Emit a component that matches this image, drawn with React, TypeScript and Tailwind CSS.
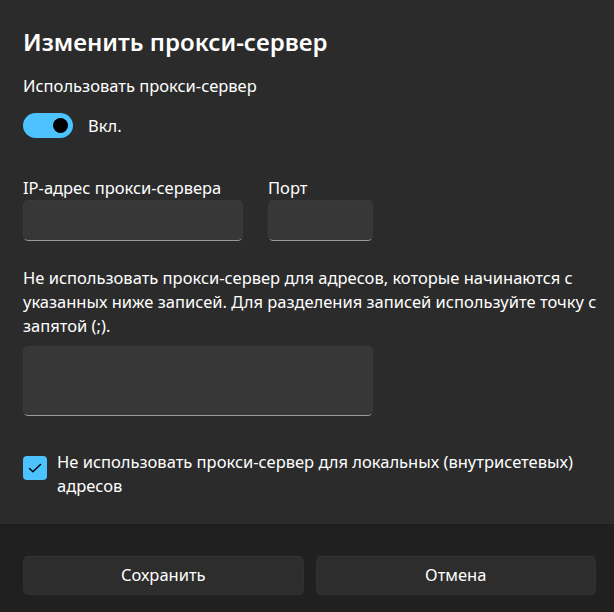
// Диалог «Изменить прокси-сервер» в тёмной теме Windows 11 (масштаб 125%).
const FONT = "font-['Noto_Sans','Open_Sans',sans-serif]";

function Toggle({ on }: { on: boolean }) {
  return (
    <div className="flex h-[25px] items-center gap-[15px]">
      <div
        className={`flex h-[25px] w-[50px] items-center rounded-full px-[5px] ${
          on ? "justify-end bg-[#4cc2ff]" : "justify-start border border-[#9a9a9a]"
        }`}
      >
        <div className="h-[15px] w-[15px] rounded-full bg-black" />
      </div>
      <span className="text-[16.5px] leading-6 text-white">{on ? "Вкл." : "Откл."}</span>
    </div>
  );
}

function Field({ className }: { className: string }) {
  return (
    <div
      className={`rounded-[5px] border border-[#3a3a3a] border-b-[#9a9a9a] bg-[#373737] ${className}`}
    />
  );
}

export default function App() {
  return (
    <div className={`flex h-[612px] w-[614px] flex-col bg-[#2b2b2b] text-white ${FONT}`}>
      <div className="flex flex-1 flex-col px-[23px] pt-[26px]">
        <h1 className="text-[24px] font-semibold leading-8">Изменить прокси-сервер</h1>
        <p className="mt-4 text-[16.5px] leading-6">Использовать прокси-сервер</p>
        <div className="mt-[15px]">
          <Toggle on />
        </div>

        <div className="mt-[38px] flex gap-[25px]">
          <div className="flex flex-col">
            <span className="text-[16.5px] leading-6">IP-адрес прокси-сервера</span>
            <Field className="h-[41px] w-[220px]" />
          </div>
          <div className="flex flex-col">
            <span className="text-[16.5px] leading-6">Порт</span>
            <Field className="h-[41px] w-[105px]" />
          </div>
        </div>

        <p className="mt-[25px] text-[16.5px] leading-6 whitespace-nowrap">
          Не использовать прокси-сервер для адресов, которые начинаются с
          <br />
          указанных ниже записей. Для разделения записей используйте точку с
          <br />
          запятой (;).
        </p>
        <Field className="mt-2 h-[70px] w-[350px]" />

        <div className="mt-[34px] flex gap-[10px]">
          <div className="mt-[6px] flex h-6 w-6 shrink-0 items-center justify-center rounded-[4px] bg-[#4cc2ff]">
            <svg width="16" height="16" viewBox="0 0 16 16" fill="none">
              <path d="M2.5 8.6l3.4 3.2L13.5 4.6" stroke="black" strokeWidth="1.4" strokeLinecap="round" strokeLinejoin="round" />
            </svg>
          </div>
          <p className="text-[16.5px] leading-6 whitespace-nowrap">
            Не использовать прокси-сервер для локальных (внутрисетевых)
            <br />
            адресов
          </p>
        </div>
      </div>

      <div className="flex h-[88px] gap-3 border-t border-[#1c1c1c] bg-[#202020] pl-[23px] pr-[18px] pt-[31px]">
        <button className="h-[39px] flex-1 rounded-[5px] border border-[#303030] border-t-[#353535] bg-[#2d2d2d] text-[16.5px] text-white">
          Сохранить
        </button>
        <button className="h-[39px] flex-1 rounded-[5px] border border-[#303030] border-t-[#353535] bg-[#2d2d2d] text-[16.5px] text-white">
          Отмена
        </button>
      </div>
    </div>
  );
}
